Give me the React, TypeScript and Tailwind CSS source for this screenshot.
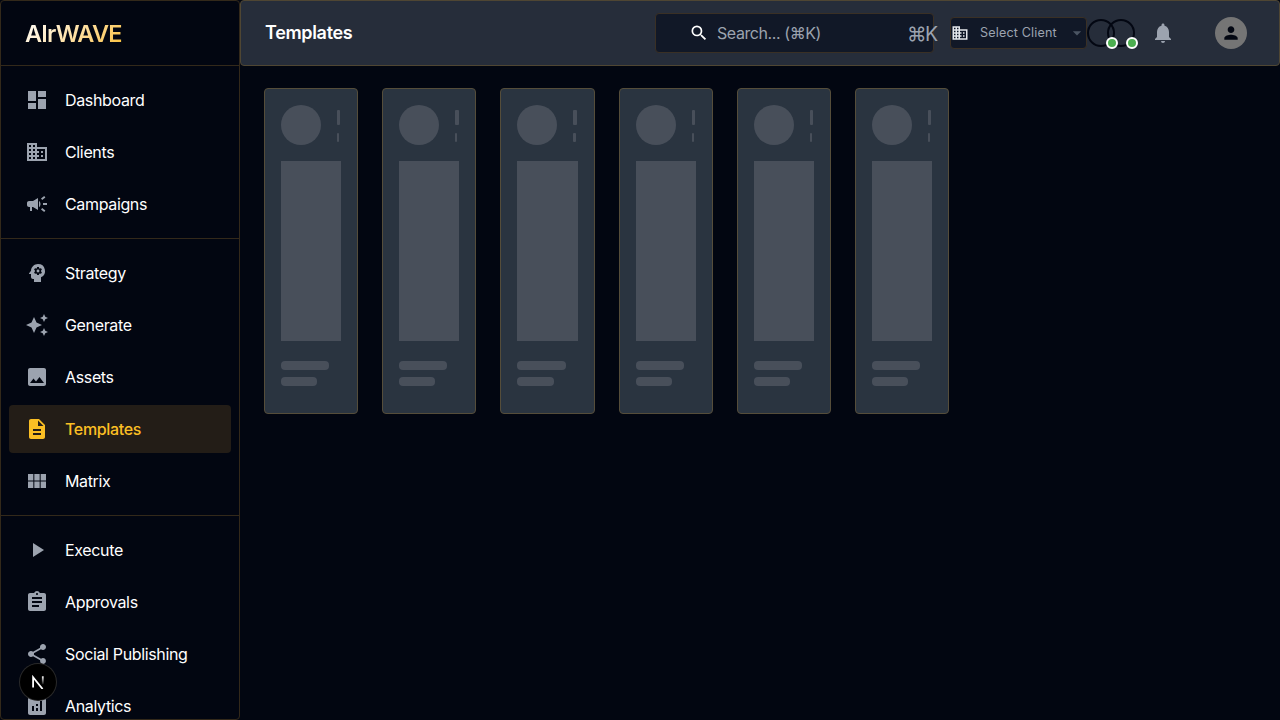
import type { ComponentType } from "react";
import {
  MdAnalytics,
  MdArrowDropDown,
  MdAssignment,
  MdAutoAwesome,
  MdBusiness,
  MdCampaign,
  MdDashboard,
  MdDescription,
  MdImage,
  MdNotifications,
  MdPerson,
  MdPlayArrow,
  MdPsychology,
  MdSearch,
  MdShare,
} from "react-icons/md";

type NavItem = {
  label: string;
  icon: ComponentType<{ className?: string }>;
  active?: boolean;
};

function ModuleIcon({ className }: { className?: string }) {
  return (
    <svg viewBox="0 0 24 24" fill="currentColor" className={className}>
      <path d="M14.67 5v6.5H9.33V5h5.34zm1 6.5H21V5h-5.33v6.5zm-1 7.5v-6.5H9.33V19h5.34zm1-6.5V19H21v-6.5h-5.33zm-7.34 0H3V19h5.33v-6.5zm0-1V5H3v6.5h5.33z" />
    </svg>
  );
}

const groups: NavItem[][] = [
  [
    { label: "Dashboard", icon: MdDashboard },
    { label: "Clients", icon: MdBusiness },
    { label: "Campaigns", icon: MdCampaign },
  ],
  [
    { label: "Strategy", icon: MdPsychology },
    { label: "Generate", icon: MdAutoAwesome },
    { label: "Assets", icon: MdImage },
    { label: "Templates", icon: MdDescription, active: true },
    { label: "Matrix", icon: ModuleIcon },
  ],
  [
    { label: "Execute", icon: MdPlayArrow },
    { label: "Approvals", icon: MdAssignment },
    { label: "Social Publishing", icon: MdShare },
    { label: "Analytics", icon: MdAnalytics },
  ],
];

function NavRow({ label, icon: Icon, active }: NavItem) {
  return (
    <li
      className={
        active
          ? "mx-2 mb-1 flex h-12 items-center rounded bg-[#231d17] px-4 font-medium text-[#fbbf24]"
          : "mx-2 mb-1 flex h-12 items-center rounded px-4 text-white"
      }
    >
      <Icon className={active ? "size-6 shrink-0" : "size-6 shrink-0 text-[#9ca3af]"} />
      <span className="ml-4 text-base leading-6 tracking-[-0.35px]">{label}</span>
    </li>
  );
}

function Sidebar() {
  return (
    <aside className="h-full w-60 shrink-0 overflow-hidden rounded border border-[#33291a]">
      <div className="flex h-[65px] items-center border-b border-[#33291a] px-6 pt-0.5">
        <span className="bg-linear-135 from-white to-[#fbbf24] bg-clip-text text-[23.5px] leading-8 font-semibold tracking-[-0.75px] text-transparent">
          AIrWAVE
        </span>
      </div>
      {groups.map((items, i) => (
        <ul key={i} className={i < 2 ? "border-b border-[#33291a] pt-2.5 pb-1.5" : "pt-2.5"}>
          {items.map((item) => (
            <NavRow key={item.label} {...item} />
          ))}
        </ul>
      ))}
    </aside>
  );
}

function Presence() {
  return (
    <div className="relative size-7">
      <div className="size-7 rounded-full border-2 border-[#030712]" />
      <span className="absolute top-[18px] left-[19px] z-10 size-3 rounded-full border-2 border-white bg-[#4caf50]" />
    </div>
  );
}

function Header() {
  return (
    <header className="flex h-[66px] shrink-0 items-center rounded border border-[#4f4633] bg-[#262d3a] pl-6">
      <h1 className="w-[390px] text-lg font-semibold tracking-[-0.33px] text-white">Templates</h1>
      <div className="flex h-10 w-[279px] shrink-0 items-center rounded border border-[#3a3025] bg-[#111827] pl-[33px] text-[#9ca3af]">
        <MdSearch className="size-5 shrink-0 text-white" />
        <span className="ml-2 w-[190px] shrink-0 text-base tracking-[-0.42px]">Search... (⌘K)</span>
        <span className="mt-1 shrink-0 text-[19.5px] tracking-[-1.5px]">⌘K</span>
      </div>
      <div className="ml-4 flex h-8 w-[137px] shrink-0 items-center rounded border border-[#3a3025] bg-[#111827] text-[#9ca3af]">
        <MdBusiness className="size-[18px] shrink-0 text-[#e5e7eb]" />
        <span className="ml-[11px] w-[87px] shrink-0 pt-px text-[12.6px] tracking-[0.15px]">
          Select Client
        </span>
        <MdArrowDropDown className="size-5 shrink-0 text-[#4b5563]" />
      </div>
      <div className="flex">
        <Presence />
        <div className="-ml-2">
          <Presence />
        </div>
      </div>
      <MdNotifications className="ml-4 size-6 text-[#9ca3af]" />
      <div className="ml-10 flex size-8 items-center justify-center rounded-full bg-[#757575] text-[#030712]">
        <MdPerson className="size-5" />
      </div>
    </header>
  );
}

function SkeletonCard() {
  return (
    <div className="h-[326px] rounded border border-[#554d3a] bg-[#2a3440] p-4">
      <div className="flex h-10">
        <div className="size-10 shrink-0 rounded-full bg-[#484f5a]" />
        <div className="ml-4 flex-1 pt-[5.2px]">
          <div className="h-[14.4px] w-4/5 rounded-[1px] bg-[#484f5a]" />
          <div className="mt-2 h-[9.6px] w-[55%] rounded-[1px] bg-[#484f5a]" />
        </div>
      </div>
      <div className="mt-4 h-[180px] bg-[#484f5a]" />
      <div className="mt-5 h-[9px] w-4/5 rounded bg-[#484f5a]" />
      <div className="mt-[7px] h-[9px] w-3/5 rounded bg-[#484f5a]" />
    </div>
  );
}

export default function App() {
  return (
    <div className="relative flex h-[720px] w-[1280px] overflow-hidden bg-[#020611] font-['Inter',sans-serif]">
      <Sidebar />
      <div className="flex min-w-0 flex-1 flex-col">
        <Header />
        <main className="grid w-[733.2px] grid-cols-6 gap-6 px-6 pt-[22px]">
          {Array.from({ length: 6 }, (_, i) => (
            <SkeletonCard key={i} />
          ))}
        </main>
      </div>
      <div className="absolute top-[664px] left-5 flex size-9 items-center justify-center rounded-full bg-black ring-1 ring-[#2a2a2a]">
        <svg viewBox="0 0 14 14" className="size-[14px]" fill="none" stroke="white" strokeWidth="1.8">
          <path d="M2.1 12.5V2.3L11.6 14" />
          <path d="M11.8 1.3v8" stroke="url(#tail)" />
          <defs>
            <linearGradient id="tail" x1="11" y1="1.3" x2="11" y2="10" gradientUnits="userSpaceOnUse">
              <stop stopColor="white" />
              <stop offset="1" stopColor="white" stopOpacity="0" />
            </linearGradient>
          </defs>
        </svg>
      </div>
    </div>
  );
}
